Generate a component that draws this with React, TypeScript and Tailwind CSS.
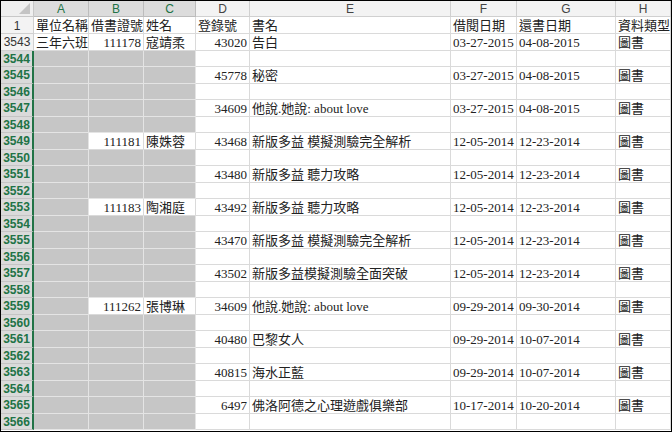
import React from 'react'

const COLS = ['w-[33px]', 'w-[55px]', 'w-[55px]', 'w-[52px]', 'w-[54px]', 'w-[201px]', 'w-[66px]', 'w-[99px]', 'flex-1']
const LETTERS = ['A', 'B', 'C', 'D', 'E', 'F', 'G', 'H']

type Row = { n: number; a?: string; b?: string; c?: string; d?: string; e?: string; f?: string; g?: string; h?: string }

const DATA: Row[] = [
  { n: 3543, a: '三年六班', b: '111178', c: '寇靖柔', d: '43020', e: '告白', f: '03-27-2015', g: '04-08-2015', h: '圖書' },
  { n: 3544 },
  { n: 3545, d: '45778', e: '秘密', f: '03-27-2015', g: '04-08-2015', h: '圖書' },
  { n: 3546 },
  { n: 3547, d: '34609', e: '他說.她說: about love', f: '03-27-2015', g: '04-08-2015', h: '圖書' },
  { n: 3548 },
  { n: 3549, b: '111181', c: '陳姝蓉', d: '43468', e: '新版多益 模擬測驗完全解析', f: '12-05-2014', g: '12-23-2014', h: '圖書' },
  { n: 3550 },
  { n: 3551, d: '43480', e: '新版多益 聽力攻略', f: '12-05-2014', g: '12-23-2014', h: '圖書' },
  { n: 3552 },
  { n: 3553, b: '111183', c: '陶湘庭', d: '43492', e: '新版多益 聽力攻略', f: '12-05-2014', g: '12-23-2014', h: '圖書' },
  { n: 3554 },
  { n: 3555, d: '43470', e: '新版多益 模擬測驗完全解析', f: '12-05-2014', g: '12-23-2014', h: '圖書' },
  { n: 3556 },
  { n: 3557, d: '43502', e: '新版多益模擬測驗全面突破', f: '12-05-2014', g: '12-23-2014', h: '圖書' },
  { n: 3558 },
  { n: 3559, b: '111262', c: '張博琳', d: '34609', e: '他說.她說: about love', f: '09-29-2014', g: '09-30-2014', h: '圖書' },
  { n: 3560 },
  { n: 3561, d: '40480', e: '巴黎女人', f: '09-29-2014', g: '10-07-2014', h: '圖書' },
  { n: 3562 },
  { n: 3563, d: '40815', e: '海水正藍', f: '09-29-2014', g: '10-07-2014', h: '圖書' },
  { n: 3564 },
  { n: 3565, d: '6497', e: '佛洛阿德之心理遊戲俱樂部', f: '10-17-2014', g: '10-20-2014', h: '圖書' },
  { n: 3566 },
]

const body = "font-['Liberation_Serif','Noto_Sans_CJK_TC',serif] text-[13px] leading-[14px] text-[#222]"
const sans = "font-['Liberation_Sans','Noto_Sans',sans-serif] text-[12px]"

function Cell({ w, text, right, gray }: { w: string; text?: string; right?: boolean; gray?: boolean }) {
  return (
    <div
      className={`${w} flex h-full shrink-0 items-end overflow-visible whitespace-pre border-r border-b ${
        right ? 'justify-end pr-[2px]' : 'justify-start pl-[2px]'
      } ${gray ? 'border-[#e4e4e4] bg-[#c6c6c6]' : 'border-[#dadada] bg-white'}`}
    >
      {text}
    </div>
  )
}

export default function App() {
  return (
    <div className="h-[432px] w-[672px] overflow-hidden border border-black bg-white">
      {/* column letters */}
      <div className="flex h-[16px]">
        <div className={`${COLS[0]} relative shrink-0 border-r border-b border-[#c8c8c8] bg-[#efefef]`}>
          <svg className="absolute right-[3px] bottom-[2px]" width="11" height="11" viewBox="0 0 11 11">
            <polygon points="11,0 11,11 0,11" fill="#c4c4c4" />
          </svg>
        </div>
        {LETTERS.map((l, i) => (
          <div
            key={l}
            className={`${COLS[i + 1]} ${sans} flex shrink-0 items-center justify-center border-r border-b ${
              i < 3 ? 'border-[#bcbcbc] bg-[#dcdcdc] text-[#217346]' : 'border-[#d0d0d0] bg-[#f3f3f3] text-[#444]'
            }`}
          >
            {l}
          </div>
        ))}
      </div>

      {/* header row 1 */}
      <div className={`flex h-[17px] ${body}`}>
        <div className={`${COLS[0]} ${sans} flex shrink-0 items-center justify-center border-r border-b border-[#d0d0d0] bg-[#f3f3f3] pt-px text-[#333]`}>1</div>
        <Cell w={COLS[1]} text="單位名稱" />
        <Cell w={COLS[2]} text="借書證號" />
        <Cell w={COLS[3]} text="姓名" />
        <Cell w={COLS[4]} text="登錄號" />
        <Cell w={COLS[5]} text="書名" />
        <Cell w={COLS[6]} text="借閱日期" />
        <Cell w={COLS[7]} text="還書日期" />
        <Cell w={COLS[8]} text="資料類型" />
      </div>

      {DATA.map((r) => {
        const sel = r.n > 3543
        const grayBC = sel && !r.b
        return (
          <div key={r.n} className={`flex h-[16.5px] ${body}`}>
            <div
              className={`${COLS[0]} ${sans} flex shrink-0 items-center justify-center border-b pt-px ${
                sel
                  ? 'border-r-2 border-b-[#c4c4c4] border-r-[#217346] bg-[#dadada] font-bold text-[#217346]'
                  : 'border-r border-[#d0d0d0] bg-[#f3f3f3] text-[#333]'
              }`}
            >
              {r.n}
            </div>
            <Cell w={COLS[1]} text={r.a} gray={sel} />
            <Cell w={COLS[2]} text={r.b} right gray={grayBC} />
            <Cell w={COLS[3]} text={r.c} gray={grayBC} />
            <Cell w={COLS[4]} text={r.d} right />
            <Cell w={COLS[5]} text={r.e} />
            <Cell w={COLS[6]} text={r.f} />
            <Cell w={COLS[7]} text={r.g} />
            <Cell w={COLS[8]} text={r.h} />
          </div>
        )
      })}
    </div>
  )
}
